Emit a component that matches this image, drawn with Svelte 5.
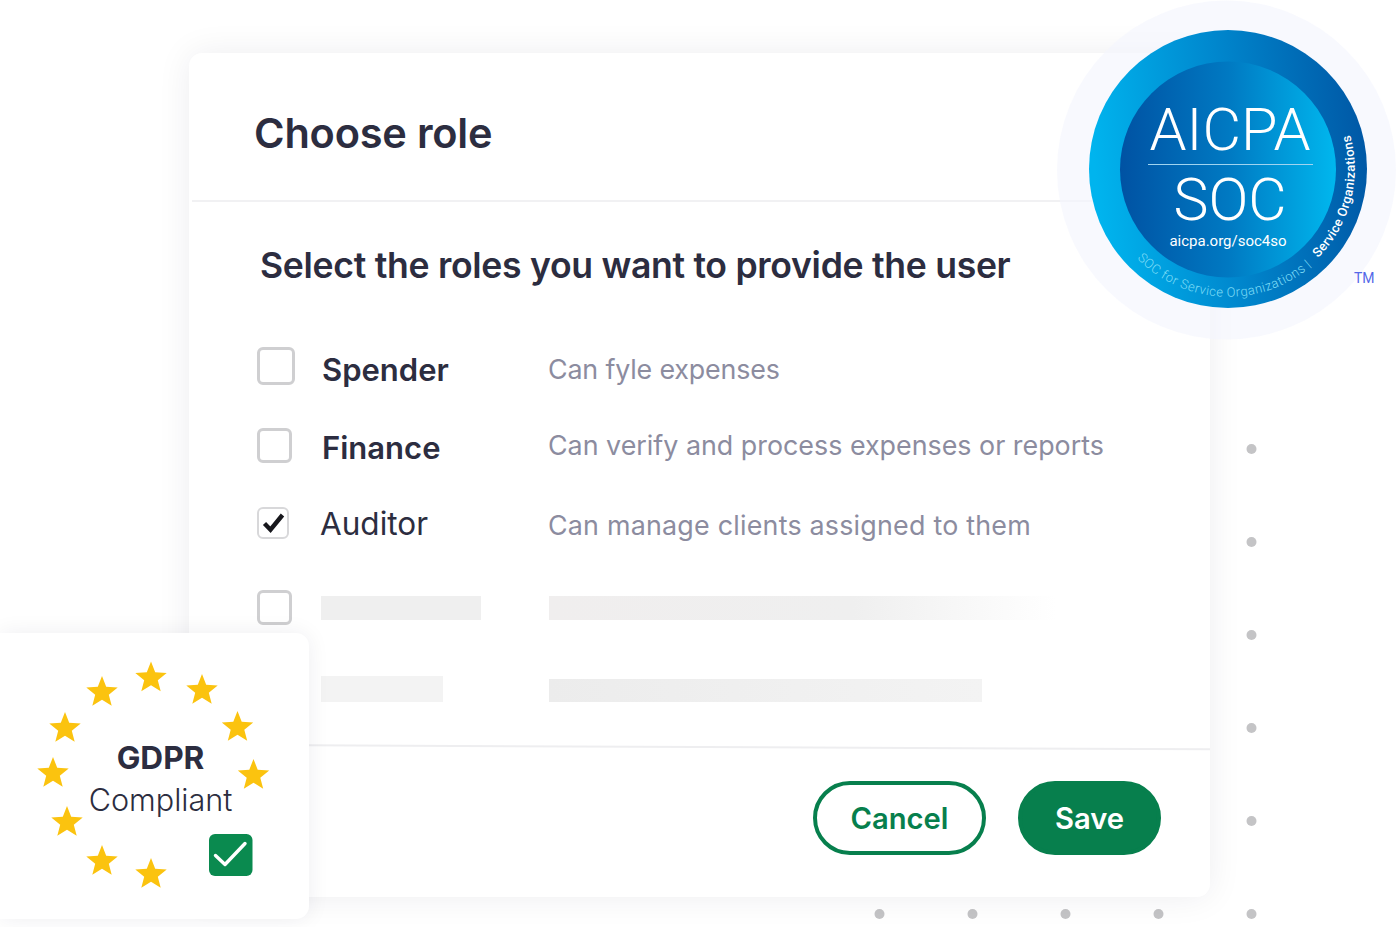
<script>
  const roles = [
    { name: 'Spender', desc: 'Can fyle expenses', cls: 'big', strong: true },
    { name: 'Finance', desc: 'Can verify and process expenses or reports', cls: 'mid', strong: true },
    { name: 'Auditor', desc: 'Can manage clients assigned to them', cls: 'small', checked: true }
  ];
  const dots = [
    [879.5,914],[972.5,914],[1065.5,914],[1158.5,914],[1251.5,914],
    [1251.5,449],[1251.5,542],[1251.5,635],[1251.5,728],[1251.5,821]
  ];
  const stars = [
    [151,678],[202,690.5],[237.5,727.5],[253.5,775.5],[67,822.5],[102,861.5],[151,874.5],[53,773.5],[65,728.5],[102,692.5]
  ];
  function starPath(cx, cy) {
    const pts = [];
    for (let i = 0; i < 10; i++) {
      const r = i % 2 ? 7.2 : 16.5;
      const a = -Math.PI / 2 + (i * Math.PI) / 5;
      pts.push((cx + r * Math.cos(a)).toFixed(1) + ',' + (cy + r * Math.sin(a)).toFixed(1));
    }
    return pts.join(' ');
  }
</script>

<div class="stage">
  <svg class="dots" width="1396" height="927" viewBox="0 0 1396 927" aria-hidden="true">
    {#each dots as d}<circle cx={d[0]} cy={d[1]} r="5" fill="#c4c4c6" />{/each}
  </svg>

  <section class="card">
    <header class="head"><h1>Choose role</h1></header>
    <div class="body">
      <h2>Select the roles you want to provide the user</h2>
      <div class="rows">
        {#each roles as r}
          <div class="row {r.cls}">
            <span class="box">
              {#if r.checked}
                <svg viewBox="0 0 31 31" width="31" height="31" aria-hidden="true"><path d="M6.5 15.5l6 6.2L24.5 7" fill="none" stroke="#17171c" stroke-width="4.4" /></svg>
              {/if}
            </span>
            <span class="name" class:strong={r.strong}>{r.name}</span>
            <span class="desc">{r.desc}</span>
          </div>
        {/each}
        <div class="row mid skel-a">
          <span class="box"></span>
          <span class="bar label-a"></span>
          <span class="bar desc-a"></span>
        </div>
        <div class="row skel-b">
          <span class="box none"></span>
          <span class="bar label-b"></span>
          <span class="bar desc-b"></span>
        </div>
      </div>
    </div>
    <div class="rule"></div>
    <footer class="foot">
      <button class="btn ghost">Cancel</button>
      <button class="btn solid">Save</button>
    </footer>
  </section>

  <div class="gdpr">
    <svg class="stars" width="310" height="294" viewBox="0 633 310 294" aria-hidden="true">
      {#each stars as s}<polygon points={starPath(s[0], s[1])} fill="#fbc30f" />{/each}
      <rect x="209" y="834" width="43.5" height="42" rx="6" fill="#0a8a4f" />
      <path d="M215.5 855.5l9.5 9 20-21" fill="none" stroke="#fff" stroke-width="3.4" stroke-linecap="round" stroke-linejoin="round" />
    </svg>
    <strong>GDPR</strong>
    <span>Compliant</span>
  </div>

  <svg class="soc" width="346" height="346" viewBox="1050 0 346 346">
    <defs>
      <linearGradient id="ringG" x1="0" x2="1" y1="0.3" y2="0.2">
        <stop offset="0" stop-color="#00b4ee" />
        <stop offset="0.45" stop-color="#0089cf" />
        <stop offset="1" stop-color="#0056a4" />
      </linearGradient>
      <linearGradient id="coreG" x1="0" x2="1" y1="0" y2="0">
        <stop offset="0" stop-color="#0052a3" />
        <stop offset="0.5" stop-color="#0079c2" />
        <stop offset="1" stop-color="#00b7ee" />
      </linearGradient>
      <path id="arcA" d="M1137 258.5A128 128 0 0 0 1316 262" fill="none" />
      <path id="arcB" d="M1318 258A127 127 0 0 0 1348 127.6" fill="none" />
    </defs>
    <circle cx="1226.5" cy="170" r="169.5" fill="#f3f5fd" fill-opacity="0.62" />
    <circle cx="1228" cy="169" r="139" fill="url(#ringG)" />
    <circle cx="1228" cy="169.5" r="108" fill="url(#coreG)" />
    <text class="aicpa" x="1230" y="150" text-anchor="middle" textLength="161" lengthAdjust="spacingAndGlyphs">AICPA</text>
    <line x1="1148" x2="1313" y1="164.5" y2="164.5" stroke="#9fd4f0" stroke-width="1" />
    <text class="socw" x="1230" y="220" text-anchor="middle" textLength="113" lengthAdjust="spacingAndGlyphs">SOC</text>
    <text class="url" x="1228" y="246" text-anchor="middle">aicpa.org/soc4so</text>
    <text class="arc-a"><textPath href="#arcA">SOC for Service Organizations  |</textPath></text>
    <text class="arc-b"><textPath href="#arcB">Service Organizations</textPath></text>
    <text class="tm" x="1354" y="283">TM</text>
  </svg>
</div>

<style>
  :global(body) {
    margin: 0;
    background: #fff;
    font-family: Inter, "Liberation Sans", sans-serif;
  }
  .stage {
    position: relative;
    width: 1396px;
    height: 927px;
    overflow: hidden;
    box-sizing: border-box;
    padding: 53px 0 0 189px;
    background: #fff;
  }
  .dots { position: absolute; left: 0; top: 0; }
  .card {
    position: relative;
    width: 1021px;
    height: 844px;
    background: #fff;
    border-radius: 13px;
    box-shadow: 0 0 34px rgba(30, 30, 50, 0.075);
    display: flex;
    flex-direction: column;
  }
  .head {
    height: 149px;
    box-sizing: border-box;
    padding: 52px 0 0 62px;
    border-bottom: 2px solid #f1f1f3;
    margin-left: 3px;
  }
  h1 {
    margin: 0;
    font-size: 41.5px;
    line-height: 56px;
    font-weight: 600;
    color: #2c2d40;
    letter-spacing: -0.2px;
  }
  .body { padding: 42px 0 0 68px; flex: 1; }
  h2 {
    margin: 0 0 0 3px;
    font-size: 35.6px;
    line-height: 44px;
    font-weight: 600;
    color: #2c2d40;
    letter-spacing: -0.3px;
  }
  .rows { margin-top: 40px; display: flex; flex-direction: column; }
  .row {
    display: grid;
    grid-template-columns: 64px 228px 1fr;
    align-items: center;
    height: 78px;
  }
  .row.skel-a { height: 88px; }
  .row.skel-b { height: 78px; }
  .box {
    box-sizing: border-box;
    display: block;
    border: 3px solid #cfcfd1;
    border-radius: 6px;
    width: 35px;
    height: 35px;
    background: #fff;
  }
  .box.none { visibility: hidden; }
  .big .box { width: 38px; height: 38px; margin-bottom: 2px; }
  .small .box { width: 32px; height: 32px; border-width: 2px; border-color: #d8d8da; }
  .small .box svg { display: block; margin: -1.5px; }
  .skel-a .box { margin-top: 2px; }
  .name { font-size: 31.5px; font-weight: 400; color: #2c2d40; margin-left: -1px; }
  .name.strong { font-size: 31px; font-weight: 600; margin: 0; transform: translate(1px, 1.5px); }
  .desc { font-size: 26.85px; color: #8c8c9f; margin: 3px 0 0 -1px; }
  .big .desc { letter-spacing: -0.17px; }
  .mid .desc { margin-top: 0; }
  .small .desc { letter-spacing: 0.22px; margin-top: 4px; }
  .bar { display: block; background: #efefef; }
  .label-a { width: 160px; height: 24px; margin-top: 4px; }
  .desc-a { width: 507px; height: 24px; margin-top: 4px; background: linear-gradient(90deg, #f0eeee, #efefef 60%, rgba(240,240,240,0)); }
  .label-b { width: 122px; height: 26px; background: #f3f3f3; }
  .desc-b { width: 433px; height: 23px; margin-top: 2px; background: linear-gradient(90deg, #ececec, #f3f3f3); }
  .rule {
    height: 2px;
    background: #eeeef0;
    transform: rotate(0.25deg);
    margin-bottom: 33px;
  }
  .foot {
    display: flex;
    justify-content: flex-end;
    gap: 32px;
    padding: 0 49px 42px 0;
  }
  .btn {
    box-sizing: border-box;
    height: 74px;
    border-radius: 37px;
    font-family: inherit;
    font-size: 29.2px;
    font-weight: 600;
    border: 4px solid #077f4d;
    padding: 0;
  }
  .ghost { width: 173px; background: #fff; color: #077f4d; }
  .solid { width: 143px; background: #077f4d; color: #fff; }
  .gdpr {
    position: absolute;
    left: 0;
    top: 633px;
    width: 309px;
    height: 286px;
    background: #fff;
    border-radius: 0 13px 13px 0;
    box-shadow: 0 0 22px rgba(30, 30, 50, 0.07);
    display: flex;
    flex-direction: column;
    align-items: center;
    box-sizing: border-box;
    padding: 103px 0 0 12px;
    color: #2c2d40;
  }
  .stars { position: absolute; left: 0; top: 0; }
  .gdpr strong { font-size: 31.6px; line-height: 44px; font-weight: 700; position: relative; }
  .gdpr span { font-size: 30.6px; line-height: 40px; font-weight: 300; position: relative; }
  .soc { position: absolute; left: 1050px; top: 0; }
  .soc text { font-family: Roboto, "Liberation Sans", sans-serif; }
  .aicpa, .socw { fill: #fff; font-weight: 300; font-size: 60px; }
  .url { fill: #fff; font-size: 15px; }
  .arc-a { fill: #7ddcf6; font-size: 13px; font-weight: 300; letter-spacing: 0.5px; }
  .arc-b { fill: #fff; font-size: 12.9px; font-weight: 500; letter-spacing: 0.35px; }
  .tm { fill: #5468e8; font-size: 14px; }
</style>
